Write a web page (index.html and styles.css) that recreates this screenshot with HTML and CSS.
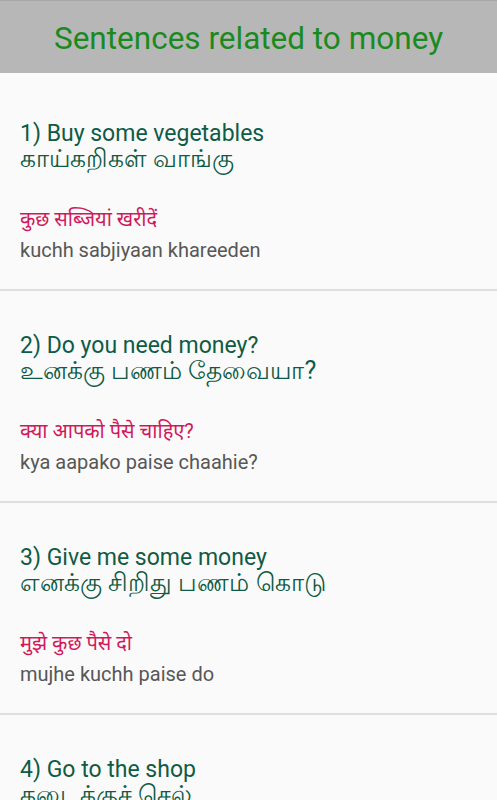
FILE: index.html
```html
<!DOCTYPE html>
<html>
<head>
<meta charset="utf-8">
<link rel="stylesheet" href="styles.css">
</head>
<body>
<header class="bar"><h1 class="bar-title">Sentences related to money</h1></header>
<main class="list">
  <section class="item">
    <p class="en">1) Buy some vegetables</p>
    <p class="ta">காய்கறிகள் வாங்கு</p>
    <p class="hi">कुछ सब्जियां खरीदें</p>
    <p class="tr">kuchh sabjiyaan khareeden</p>
  </section>
  <section class="item">
    <p class="en">2) Do you need money?</p>
    <p class="ta">உனக்கு பணம் தேவையா?</p>
    <p class="hi">क्या आपको पैसे चाहिए?</p>
    <p class="tr">kya aapako paise chaahie?</p>
  </section>
  <section class="item">
    <p class="en">3) Give me some money</p>
    <p class="ta">எனக்கு சிறிது பணம் கொடு</p>
    <p class="hi">मुझे कुछ पैसे दो</p>
    <p class="tr">mujhe kuchh paise do</p>
  </section>
  <section class="item">
    <p class="en">4) Go to the shop</p>
    <p class="ta">கடைக்குச் செல்</p>
    <p class="hi">दुकान पर जाओ</p>
    <p class="tr">dukaan par jao</p>
  </section>
</main>
</body>
</html>
```
FILE: styles.css
```css
html, body { margin: 0; padding: 0; }
body {
  background: #fafafa;
  font-family: Roboto, "Noto Sans", sans-serif;
  overflow: hidden;
  height: 800px;
}
.bar {
  height: 73px;
  background: #b7b7b7;
  border-top: 1px solid #a8a8a8;
  box-sizing: border-box;
  display: flex;
  align-items: center;
  justify-content: center;
  padding-top: 3px;
}
.bar-title {
  margin: 0;
  font-weight: 400;
  font-size: 31.5px;
  color: #1a8a1f;
}
.list { padding-top: 6px; }
.item {
  padding: 42px 20px 0;
  height: 212px;
  box-sizing: border-box;
  border-bottom: 2px solid #dedede;
  overflow: hidden;
}
.item p { margin: 0; white-space: nowrap; }
.en, .ta {
  font-size: 23px;
  line-height: 25px;
  color: #0f5b45;
}
.ta { font-size: 25px; }
.hi {
  margin-top: 33px !important;
  font-size: 20px;
  line-height: 31px;
  color: #d0195c;
}
.tr {
  font-size: 20px;
  line-height: 30px;
  color: #575757;
}
```
